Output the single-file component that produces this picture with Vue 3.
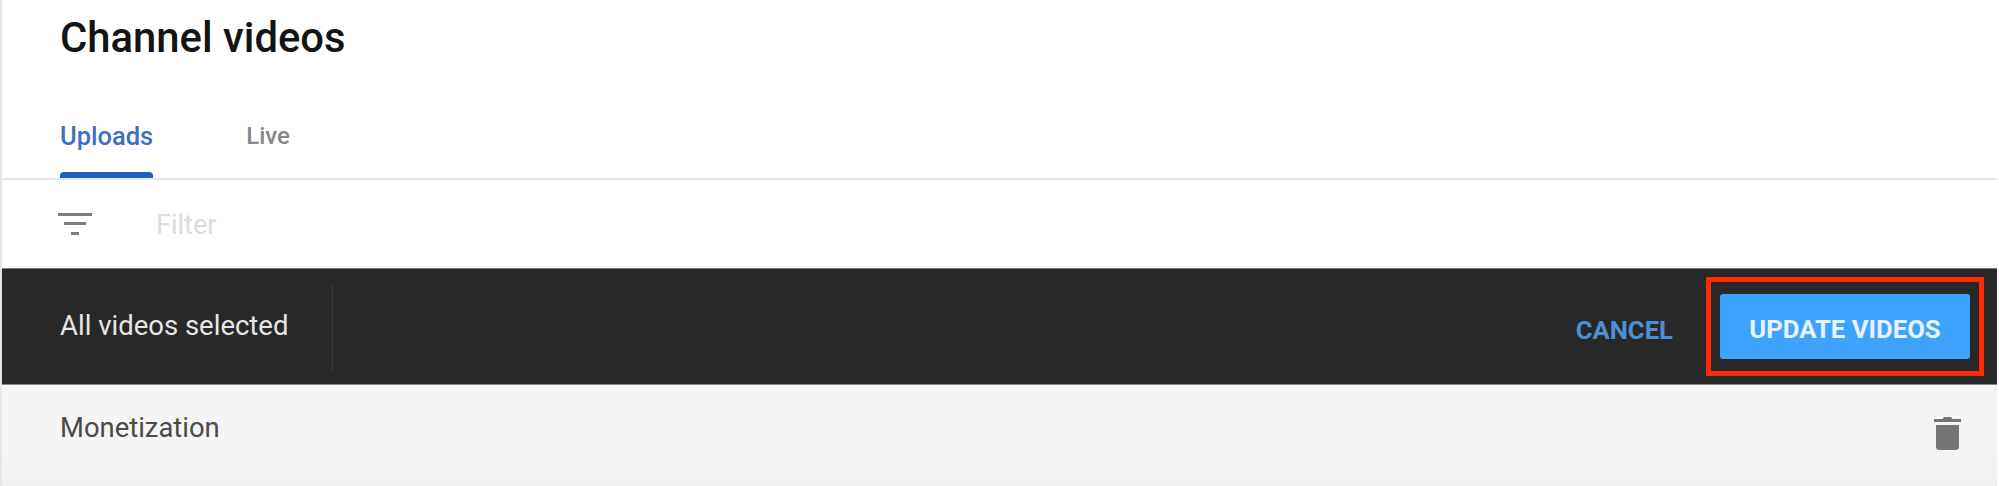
<script setup>
const tabs = [
  { label: 'Uploads', active: true },
  { label: 'Live', active: false },
]
</script>

<template>
  <div class="page">
    <header class="head">
      <h1 class="title">Channel videos</h1>
      <nav class="tabs">
        <div v-for="t in tabs" :key="t.label" class="tab" :class="{ active: t.active }">{{ t.label }}</div>
      </nav>
    </header>
    <div class="filter">
      <svg class="filter-icon" viewBox="0 0 34 22" aria-hidden="true">
        <rect x="0" y="0" width="34" height="3" fill="#7d7d7d" />
        <rect x="6" y="9" width="22" height="3" fill="#7d7d7d" />
        <rect x="13" y="19" width="8" height="3" fill="#7d7d7d" />
      </svg>
      <span class="filter-text">Filter</span>
    </div>
    <div class="bar">
      <div class="selected">All videos selected</div>
      <div class="actions">
        <span class="cancel">CANCEL</span>
        <div class="highlight">
          <button class="update" type="button">UPDATE VIDEOS</button>
        </div>
      </div>
    </div>
    <div class="row">
      <span class="row-label">Monetization</span>
      <svg class="trash" viewBox="0 0 27 33" aria-hidden="true">
        <path d="M10 0h7l1.500 2H27v3H0V2h8.500z" fill="#757575" />
        <path d="M2 8h23v21.500a3.500 3.500 0 0 1-3.500 3.500h-16A3.500 3.500 0 0 1 2 29.500z" fill="#757575" />
      </svg>
    </div>
  </div>
</template>

<style>
html, body { margin: 0; background: #fff; }
</style>

<style scoped>
.page {
  width: 1999px;
  height: 486px;
  box-sizing: border-box;
  padding: 0 2px;
  background: linear-gradient(to right, #e6e6e6 2px, #fff 2px);
  display: flex;
  flex-direction: column;
  font-family: Roboto, "Liberation Sans", sans-serif;
  overflow: hidden;
}
.head {
  height: 180px;
  box-sizing: border-box;
  background: #fff;
  border-bottom: 2px solid #e8e8e8;
  padding-left: 58px;
  display: flex;
  flex-direction: column;
}
.title {
  margin: 0;
  padding-top: 15px;
  height: 60px;
  box-sizing: content-box;
  font-size: 41.800px;
  line-height: 46px;
  font-weight: 500;
  color: #141414;
}
.tabs {
  margin-top: 37px;
  display: flex;
  gap: 93px;
  height: 66px;
}
.tab {
  font-size: 24px;
  line-height: 48px;
  height: 66px;
  box-sizing: border-box;
  font-weight: 500;
  color: #868686;
  position: relative;
}
.tab.active {
  font-size: 25.500px;
  color: #3f6fbf;
}
.tab.active::after {
  content: "";
  position: absolute;
  left: 0;
  right: 0;
  bottom: 0;
  height: 6px;
  background: #1e62c0;
  border-radius: 4px 4px 0 0;
}
.filter {
  height: 88px;
  background: #fff;
  padding-left: 56px;
  display: flex;
  align-items: center;
}
.filter-icon {
  width: 34px;
  height: 22px;
  margin-right: 64px;
}
.filter-text {
  font-size: 27px;
  color: #dcdcdc;
  padding-top: 2px;
}
.bar {
  height: 117px;
  background: #282828;
  border-top: 1px solid #777;
  border-bottom: 1px solid #8a8a8a;
  box-sizing: border-box;
  display: flex;
  align-items: center;
  justify-content: space-between;
  padding-left: 58px;
  padding-right: 13px;
}
.selected {
  font-size: 27.500px;
  color: #e6e6e6;
  height: 88px;
  line-height: 86px;
  padding-right: 44px;
  border-right: 1px solid #3a3a3a;
}
.actions {
  display: flex;
  align-items: center;
}
.cancel {
  font-size: 25.700px;
  font-weight: 700;
  color: #4a90d6;
  margin-right: 33px;
  padding-top: 6px;
}
.highlight {
  border: 5px solid #ff2a00;
  padding: 12px 9px;
  display: flex;
}
.update {
  width: 250px;
  height: 65px;
  border: 0;
  border-radius: 3px;
  background: #3ea2ff;
  color: #e6f3ff;
  font-family: inherit;
  font-size: 25.700px;
  font-weight: 700;
  padding: 5px 0 0;
}
.row {
  flex: 1;
  background: linear-gradient(#f5f5f5 60%, #f0f0f0);
  padding-left: 58px;
  padding-right: 36px;
  display: flex;
  align-items: center;
  justify-content: space-between;
  padding-bottom: 16px;
}
.row-label {
  font-size: 27.400px;
  color: #4a4a4a;
}
.trash {
  width: 27px;
  height: 33px;
  position: relative;
  top: 6px;
}
</style>
